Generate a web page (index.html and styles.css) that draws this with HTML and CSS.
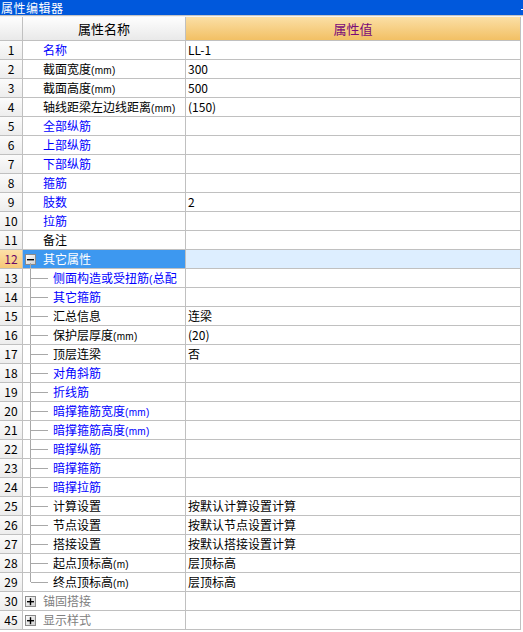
FILE: index.html
```html
<!DOCTYPE html>
<html lang="zh-CN">
<head>
<meta charset="utf-8">
<title>属性编辑器</title>
<link rel="stylesheet" href="styles.css">
</head>
<body>
<div class="app">
  <div class="titlebar"><span class="title">属性编辑器</span><span class="close"></span></div>
  <div class="sep"></div>
  <div class="grid">
    <div class="row head">
      <div class="num hnum"></div>
      <div class="name hname">属性名称</div>
      <div class="val hval">属性值</div>
    </div>

    <div class="row"><div class="num">1</div><div class="name l1 blue">名称</div><div class="val">LL-1</div></div>
    <div class="row"><div class="num">2</div><div class="name l1">截面宽度<span class="u">(mm)</span></div><div class="val">300</div></div>
    <div class="row"><div class="num">3</div><div class="name l1">截面高度<span class="u">(mm)</span></div><div class="val">500</div></div>
    <div class="row"><div class="num">4</div><div class="name l1">轴线距梁左边线距离<span class="u">(mm)</span></div><div class="val">(150)</div></div>
    <div class="row"><div class="num">5</div><div class="name l1 blue">全部纵筋</div><div class="val"></div></div>
    <div class="row"><div class="num">6</div><div class="name l1 blue">上部纵筋</div><div class="val"></div></div>
    <div class="row"><div class="num">7</div><div class="name l1 blue">下部纵筋</div><div class="val"></div></div>
    <div class="row"><div class="num">8</div><div class="name l1 blue">箍筋</div><div class="val"></div></div>
    <div class="row"><div class="num">9</div><div class="name l1 blue">肢数</div><div class="val">2</div></div>
    <div class="row"><div class="num">10</div><div class="name l1 blue">拉筋</div><div class="val"></div></div>
    <div class="row"><div class="num">11</div><div class="name l1">备注</div><div class="val"></div></div>

    <div class="row sel">
      <div class="num">12</div>
      <div class="name grp"><span class="box"><svg width="11" height="11" viewBox="0 0 11 11"><defs><linearGradient id="bg" x1="0" y1="0" x2="1" y2="1"><stop offset="0" stop-color="#ffffff"/><stop offset="1" stop-color="#cfcfcf"/></linearGradient></defs><rect x="0.5" y="0.5" width="10" height="10" fill="url(#bg)" stroke="#8a8a8a"/><rect x="2" y="5" width="7" height="1.4" fill="#000"/></svg></span><span class="gtext">其它属性</span></div>
      <div class="val"></div>
    </div>

    <div class="row"><div class="num">13</div><div class="name l2 blue">侧面构造或受扭筋<span class="u">(</span>总配</div><div class="val"></div></div>
    <div class="row"><div class="num">14</div><div class="name l2 blue">其它箍筋</div><div class="val"></div></div>
    <div class="row"><div class="num">15</div><div class="name l2">汇总信息</div><div class="val">连梁</div></div>
    <div class="row"><div class="num">16</div><div class="name l2">保护层厚度<span class="u">(mm)</span></div><div class="val">(20)</div></div>
    <div class="row"><div class="num">17</div><div class="name l2">顶层连梁</div><div class="val">否</div></div>
    <div class="row"><div class="num">18</div><div class="name l2 blue">对角斜筋</div><div class="val"></div></div>
    <div class="row"><div class="num">19</div><div class="name l2 blue">折线筋</div><div class="val"></div></div>
    <div class="row"><div class="num">20</div><div class="name l2 blue">暗撑箍筋宽度<span class="u">(mm)</span></div><div class="val"></div></div>
    <div class="row"><div class="num">21</div><div class="name l2 blue">暗撑箍筋高度<span class="u">(mm)</span></div><div class="val"></div></div>
    <div class="row"><div class="num">22</div><div class="name l2 blue">暗撑纵筋</div><div class="val"></div></div>
    <div class="row"><div class="num">23</div><div class="name l2 blue">暗撑箍筋</div><div class="val"></div></div>
    <div class="row"><div class="num">24</div><div class="name l2 blue">暗撑拉筋</div><div class="val"></div></div>
    <div class="row"><div class="num">25</div><div class="name l2">计算设置</div><div class="val">按默认计算设置计算</div></div>
    <div class="row"><div class="num">26</div><div class="name l2">节点设置</div><div class="val">按默认节点设置计算</div></div>
    <div class="row"><div class="num">27</div><div class="name l2">搭接设置</div><div class="val">按默认搭接设置计算</div></div>
    <div class="row"><div class="num">28</div><div class="name l2">起点顶标高<span class="u">(m)</span></div><div class="val">层顶标高</div></div>
    <div class="row"><div class="num">29</div><div class="name l2 last">终点顶标高<span class="u">(m)</span></div><div class="val">层顶标高</div></div>

    <div class="row">
      <div class="num">30</div>
      <div class="name grp gray"><span class="box"><svg width="11" height="11" viewBox="0 0 11 11"><defs><linearGradient id="bg2" x1="0" y1="0" x2="1" y2="1"><stop offset="0" stop-color="#ffffff"/><stop offset="1" stop-color="#cfcfcf"/></linearGradient></defs><rect x="0.5" y="0.5" width="10" height="10" fill="url(#bg2)" stroke="#8a8a8a"/><rect x="2" y="5" width="7" height="1.4" fill="#000"/><rect x="4.8" y="2.2" width="1.4" height="7" fill="#000"/></svg></span><span class="gtext">锚固搭接</span></div>
      <div class="val"></div>
    </div>
    <div class="row">
      <div class="num">45</div>
      <div class="name grp gray"><span class="box"><svg width="11" height="11" viewBox="0 0 11 11"><defs><linearGradient id="bg3" x1="0" y1="0" x2="1" y2="1"><stop offset="0" stop-color="#ffffff"/><stop offset="1" stop-color="#cfcfcf"/></linearGradient></defs><rect x="0.5" y="0.5" width="10" height="10" fill="url(#bg3)" stroke="#8a8a8a"/><rect x="2" y="5" width="7" height="1.4" fill="#000"/><rect x="4.8" y="2.2" width="1.4" height="7" fill="#000"/></svg></span><span class="gtext">显示样式</span></div>
      <div class="val"></div>
    </div>
  </div>
</div>
</body>
</html>
```
FILE: styles.css
```css
html, body {
  margin: 0;
  padding: 0;
  background: #ffffff;
}
body {
  font-family: "Noto Sans CJK SC", "Noto Sans", sans-serif;
  font-size: 12px;
  color: #000000;
  width: 523px;
  height: 632px;
  overflow: hidden;
}
.app {
  width: 523px;
}
.titlebar {
  height: 15px;
  background: #0058dc;
  color: #ffffff;
  font-size: 12px;
  line-height: 15px;
  display: flex;
  justify-content: space-between;
  align-items: flex-start;
  overflow: hidden;
}
.title {
  padding-left: 1px;
  letter-spacing: 0.5px;
}
.close {
  width: 2px;
  height: 1px;
  margin-top: 9px;
  background: #ffffff;
}
.sep {
  height: 1px;
  border-top: 1px solid #c4c4c4;
  background: #f4f4f4;
}
.grid {
  width: 520px;
  border-right: 1px solid #c0c0c0;
  margin-right: 2px;
}
.row {
  display: flex;
  height: 18px;
  border-bottom: 1px solid #c0c0c0;
}
.row.head {
  height: 23px;
}
.num {
  width: 22px;
  border-right: 1px solid #c0c0c0;
  background: linear-gradient(#fbfbfb, #ededed);
  text-align: center;
  line-height: 18px;
  font-size: 12px;
  flex: none;
}
.name {
  position: relative;
  width: 162px;
  border-right: 1px solid #c0c0c0;
  line-height: 18px;
  white-space: nowrap;
  overflow: hidden;
  flex: none;
}
.val {
  flex: 1;
  padding-left: 2px;
  line-height: 18px;
  white-space: nowrap;
  overflow: hidden;
}
.head .num,
.head .name,
.head .val {
  line-height: 23px;
  text-align: center;
  font-size: 13px;
}
.hnum, .hname {
  background: linear-gradient(#fefefe, #e9e9e9);
}
.hval {
  background: linear-gradient(#fbdfa6, #f2c064);
  color: #7a0a78;
  padding-left: 0;
}
.l1 {
  padding-left: 20px;
  width: 142px;
}
.l2 {
  padding-left: 30px;
  width: 132px;
}
.blue {
  color: #0000ff;
}
.u {
  font-family: "Liberation Sans", sans-serif;
  font-size: 10px;
  letter-spacing: 0.3px;
}
.l2::before {
  content: "";
  position: absolute;
  left: 7px;
  top: 0;
  bottom: -1px;
  width: 1px;
  background: #a8a8a8;
  z-index: 1;
}
.l2.last::before {
  bottom: 9px;
}
.l2::after {
  content: "";
  position: absolute;
  left: 8px;
  top: 9px;
  width: 17px;
  height: 1px;
  background: #a8a8a8;
}
.grp {
  display: flex;
  align-items: center;
  padding-left: 2px;
  width: 160px;
}
.box {
  width: 11px;
  height: 11px;
  display: block;
  flex: none;
}
.box svg {
  display: block;
}
.gtext {
  margin-left: 7px;
}
.sel .num {
  background: linear-gradient(#fde0a8, #f6c878);
  color: #6a0a6a;
}
.sel .name {
  background: #3d98f0;
  color: #ffffff;
}
.sel .name::after {
  content: "";
  position: absolute;
  left: 7px;
  top: 13px;
  bottom: -1px;
  width: 1px;
  background: #a8a8a8;
}
.sel .val {
  background: #ddeeff;
}
.gray {
  color: #808080;
}
```
